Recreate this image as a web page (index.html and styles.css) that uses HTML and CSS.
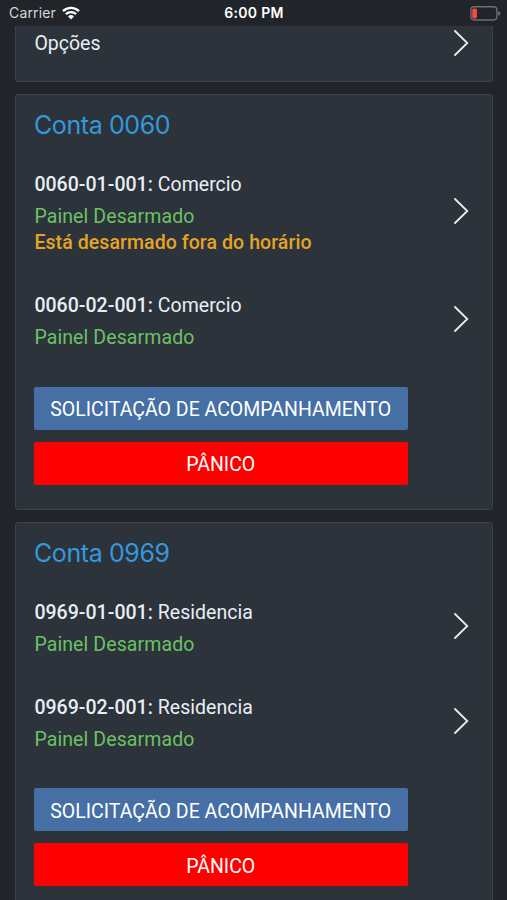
FILE: index.html
```html
<!DOCTYPE html>
<html lang="pt-BR">
<head>
  <meta charset="UTF-8" />
  <title>Contas</title>
  <link rel="stylesheet" href="styles.css">
</head>
<body>
  <div class="status-bar">
    <div class="carrier">
      <span>Carrier</span>
      <svg class="wifi" width="18" height="14" viewBox="0 0 18 14">
        <path d="M1 5.2 A11.4 11.4 0 0 1 17 5.2" />
        <path d="M3.9 8.2 A7.3 7.3 0 0 1 14.1 8.2" />
        <path class="dot" d="M9 13.6 L6 10.5 A4.3 4.3 0 0 1 12 10.5 Z" />
      </svg>
    </div>
    <div class="time">6:00 PM</div>
    <svg class="battery" width="31" height="15" viewBox="0 0 31 15">
      <rect class="shell" x="0.9" y="0.8" width="26" height="13.2" rx="3.4" />
      <rect class="level" x="2.2" y="2.4" width="4.8" height="10" rx="1.6" />
      <path class="tip" d="M28.2 5 Q30.4 5.8 30.4 7.4 Q30.4 9 28.2 9.8 Z" />
    </svg>
  </div>

  <div class="content">
    <div class="card options">
      <div class="row">
        <div>Opções</div>
        <svg class="chevron" width="16" height="26" viewBox="0 0 16 26"><path d="M2 1 L14.3 13 L2 25" /></svg>
      </div>
    </div>

    <div class="card">
      <h2><span>Conta 0060</span></h2>
      <div class="row">
        <div>
          <p class="name"><b>0060-01-001:</b> <span>Comercio</span></p>
          <p class="state">Painel Desarmado</p>
          <p class="alert"><span>Está desarmado fora do horário</span></p>
        </div>
        <svg class="chevron" width="16" height="26" viewBox="0 0 16 26"><path d="M2 1 L14.3 13 L2 25" /></svg>
      </div>
      <div class="row">
        <div>
          <p class="name"><b>0060-02-001:</b> <span>Comercio</span></p>
          <p class="state">Painel Desarmado</p>
        </div>
        <svg class="chevron" width="16" height="26" viewBox="0 0 16 26"><path d="M2 1 L14.3 13 L2 25" /></svg>
      </div>
      <div class="buttons">
        <button class="follow">SOLICITAÇÃO DE ACOMPANHAMENTO</button>
        <button class="panic">PÂNICO</button>
      </div>
    </div>

    <div class="card">
      <h2><span>Conta 0969</span></h2>
      <div class="row">
        <div>
          <p class="name"><b>0969-01-001:</b> <span>Residencia</span></p>
          <p class="state">Painel Desarmado</p>
        </div>
        <svg class="chevron" width="16" height="26" viewBox="0 0 16 26"><path d="M2 1 L14.3 13 L2 25" /></svg>
      </div>
      <div class="row">
        <div>
          <p class="name"><b>0969-02-001:</b> <span>Residencia</span></p>
          <p class="state">Painel Desarmado</p>
        </div>
        <svg class="chevron" width="16" height="26" viewBox="0 0 16 26"><path d="M2 1 L14.3 13 L2 25" /></svg>
      </div>
      <div class="buttons">
        <button class="follow">SOLICITAÇÃO DE ACOMPANHAMENTO</button>
        <button class="panic">PÂNICO</button>
      </div>
    </div>
  </div>
</body>
</html>
```
FILE: styles.css
```css
* {
  box-sizing: border-box;
}

body {
  height: 900px;
  margin: 0;
  overflow: hidden;
  background-color: #212529;
  color: #e9eef4;
  font-family: Roboto, sans-serif;
  font-size: 19.5px;
  line-height: 26px;
}

h2, p {
  margin: 0;
}

.status-bar {
  display: grid;
  grid-template-columns: 1fr auto 1fr;
  align-items: center;
  height: 26px;
  padding: 0 6px 0 9px;
  font-family: Inter, sans-serif;
  font-size: 14px;
}

.carrier {
  display: flex;
  align-items: center;
  gap: 6px;
  color: #d5d8dc;
  letter-spacing: 0.15px;
}

.wifi {
  fill: none;
  stroke: #fff;
  stroke-width: 2.4;
}

.wifi .dot {
  fill: #fff;
  stroke: none;
}

.time {
  margin-left: -2px;
  color: #fff;
  font-weight: 600;
  letter-spacing: 0.3px;
}

.battery {
  justify-self: end;
}

.battery .shell {
  fill: none;
  stroke: #6c6f73;
  stroke-width: 1.4;
}

.battery .level {
  fill: #fb4540;
}

.battery .tip {
  fill: #6c6f73;
}

.content {
  height: 874px;
  overflow: hidden;
}

.card {
  height: 415.5px;
  margin: 0 14px 12px 15px;
  padding: 13px 23px 0 18px;
  border: 1px solid #3b4249;
  border-radius: 3px;
  background-color: #2c333b;
}

.options {
  height: 56px;
  padding-top: 5px;
  border-top: 0;
  border-radius: 0 0 3px 3px;
}

h2 {
  height: 64px;
  color: #3498db;
  font-family: Inter, sans-serif;
  font-size: 25px;
  font-weight: 400;
  letter-spacing: -0.4px;
  line-height: 34px;
}

.row {
  display: flex;
  justify-content: space-between;
  align-items: center;
  margin-bottom: 37px;
  padding-left: 0.4px;
}

.name {
  margin-bottom: 6px;
  letter-spacing: 0.03px;
}

.name b {
  font-weight: 500;
}

.state {
  color: #6cc164;
  letter-spacing: 0.1px;
}

.alert {
  color: #e6a423;
  font-weight: 500;
  letter-spacing: 0.08px;
}

.chevron {
  margin-bottom: 6px;
  fill: none;
  stroke: #e9eef4;
  stroke-width: 1.8;
  stroke-linecap: round;
}

.options .chevron {
  margin: -2px 0 0;
}

.buttons {
  display: flex;
  flex-direction: column;
  gap: 12px;
  width: 373.5px;
  margin-top: -1.5px;
}

button {
  height: 43px;
  padding: 3px 0 0;
  border: 0;
  border-radius: 2px;
  color: #fff;
  font-family: inherit;
  font-size: 19.5px;
}

.follow {
  background-color: #456fa5;
}

.panic {
  background-color: #f00;
}
```
